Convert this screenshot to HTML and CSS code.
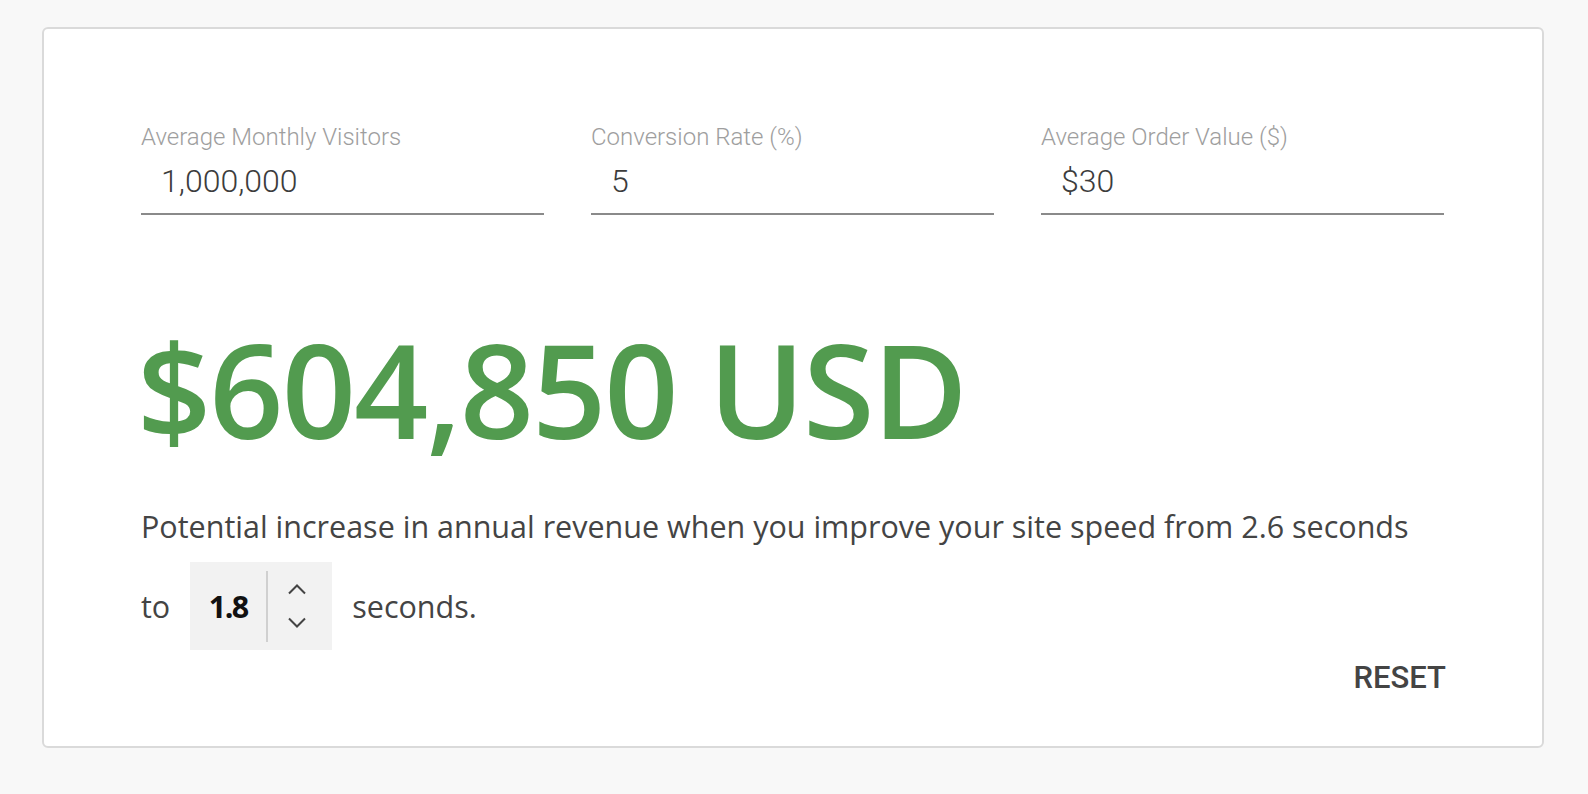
FILE: index.html
```html
<!DOCTYPE html>
<html lang="en">
<head>
<meta charset="utf-8">
<title>Revenue calculator</title>
<link rel="stylesheet" href="styles.css">
</head>
<body>
<div class="card">
  <div class="fields">
    <div class="field">
      <div class="label">Average Monthly Visitors</div>
      <div class="value">1,000,000</div>
    </div>
    <div class="field">
      <div class="label">Conversion Rate (%)</div>
      <div class="value">5</div>
    </div>
    <div class="field">
      <div class="label">Average Order Value ($)</div>
      <div class="value">$30</div>
    </div>
  </div>
  <div class="amount">$604,850 USD</div>
  <p class="desc">Potential increase in annual revenue when you improve your site speed from 2.6 seconds</p>
  <div class="row">
    <span class="word">to</span>
    <div class="spinner">
      <span class="num">1.8</span>
      <span class="divider"></span>
      <span class="arrows">
        <svg width="20" height="12" viewBox="0 0 20 12"><path d="M2 10.5 L10 2.5 L18 10.5" fill="none" stroke="#444" stroke-width="2"/></svg>
        <svg width="20" height="12" viewBox="0 0 20 12"><path d="M2 1.5 L10 9.5 L18 1.5" fill="none" stroke="#444" stroke-width="2"/></svg>
      </span>
    </div>
    <span class="word">seconds.</span>
  </div>
  <div class="actions"><span class="reset">RESET</span></div>
</div>
</body>
</html>
```
FILE: styles.css
```css
html, body {
  margin: 0;
  padding: 0;
  background: #f8f8f8;
}
body {
  padding: 27px 0 0 42px;
}
.card {
  box-sizing: border-box;
  width: 1502px;
  height: 721px;
  background: #fff;
  border: 2px solid #dadada;
  border-radius: 6px;
  padding: 93px 96px 0 97px;
  font-family: "Open Sans", "Liberation Sans", sans-serif;
  color: #444;
}
.fields {
  display: grid;
  grid-template-columns: 403px 403px 403px;
  column-gap: 47px;
}
.field {
  border-bottom: 2px solid #8a8a8a;
  height: 93px;
  box-sizing: border-box;
}
.label {
  font-family: Roboto, sans-serif;
  font-weight: 300;
  font-size: 24px;
  line-height: 30px;
  color: #9e9e9e;
}
.value {
  font-family: Roboto, sans-serif;
  font-weight: 300;
  font-size: 32px;
  line-height: 40px;
  color: #3c3c3c;
  padding: 9px 0 0 20px;
}
.amount {
  margin-top: 104px;
  font-size: 130px;
  line-height: 140px;
  font-weight: 600;
  color: #529b4f;
  letter-spacing: -2px;
  margin-left: -4px;
}
.desc {
  margin: 49px 0 0;
  font-size: 30.5px;
  line-height: 36px;
  color: #444;
}
.row {
  display: flex;
  align-items: center;
  margin-top: 18px;
  font-size: 30.5px;
}
.word {
  color: #444;
}
.spinner {
  display: flex;
  align-items: center;
  background: #f2f2f2;
  width: 142px;
  height: 88px;
  margin: 0 20px 0 20px;
  box-sizing: border-box;
}
.num {
  font-weight: 700;
  color: #111;
  width: 76px;
  text-align: center;
  letter-spacing: -1.5px;
}
.divider {
  width: 2px;
  height: 71px;
  background: #d0d0d0;
}
.arrows {
  display: flex;
  flex-direction: column;
  gap: 22px;
  margin-left: 19px;
}
.arrows svg {
  display: block;
}
.actions {
  display: flex;
  justify-content: flex-end;
  margin-top: 9px;
}
.reset {
  font-family: Roboto, sans-serif;
  font-weight: 500;
  font-size: 31px;
  color: #444;
}
```
